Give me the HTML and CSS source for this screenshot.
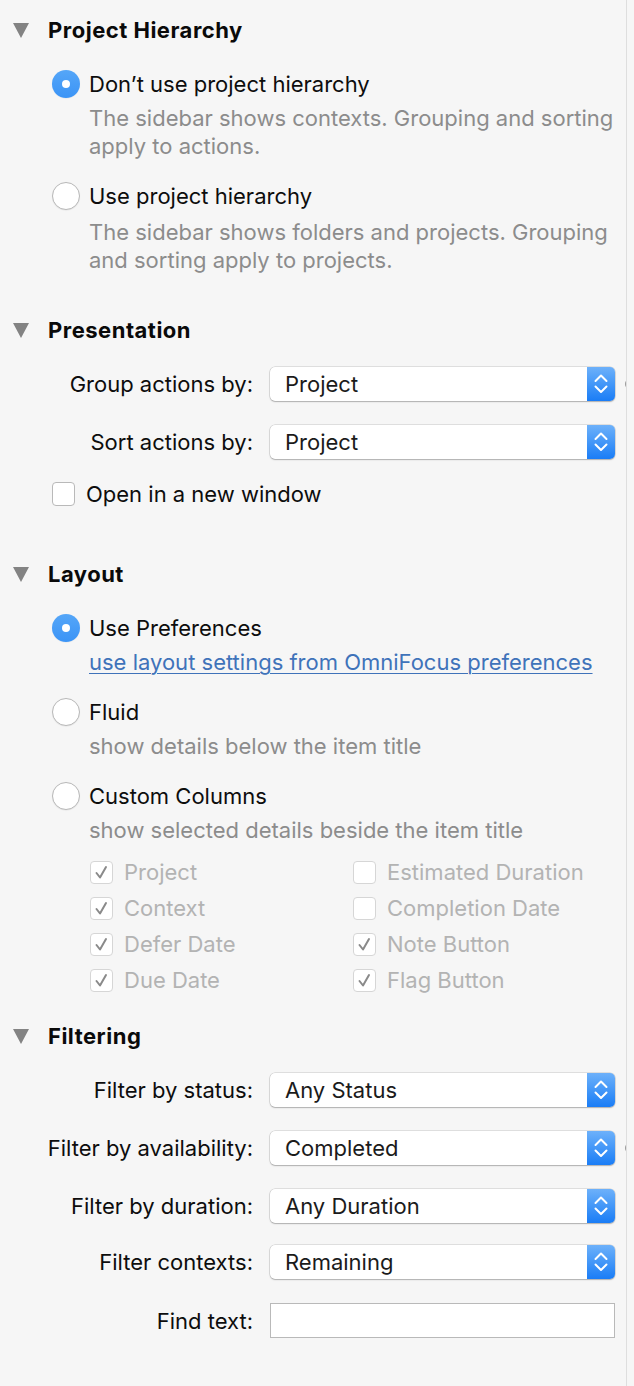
FILE: index.html
```html
<!DOCTYPE html>
<html>
<head>
<meta charset="utf-8">
<link rel="stylesheet" href="styles.css">
</head>
<body>
<div class="panel">

  <section class="sec sec-first">
    <h2 class="sec-head"><span class="tri"></span>Project Hierarchy</h2>
    <div class="opt"><span class="radio on"></span><span>Don’t use project hierarchy</span></div>
    <p class="desc">The sidebar shows contexts. Grouping and sorting apply to actions.</p>
    <div class="opt"><span class="radio"></span><span>Use project hierarchy</span></div>
    <p class="desc desc-b">The sidebar shows folders and projects. Grouping and sorting apply to projects.</p>
  </section>

  <section class="sec sec-pres">
    <h2 class="sec-head"><span class="tri"></span>Presentation</h2>
    <div class="form">
      <label class="flabel">Group actions by:</label>
      <div class="select"><span class="sel-text">Project</span><span class="sel-btn"><svg viewBox="0 0 28 34" width="28" height="34"><polyline points="8.5,14 14,8.5 19.5,14" /><polyline points="8.5,19.5 14,25 19.5,19.5" /></svg></span></div>
      <span class="peek"></span>
      <label class="flabel">Sort actions by:</label>
      <div class="select"><span class="sel-text">Project</span><span class="sel-btn"><svg viewBox="0 0 28 34" width="28" height="34"><polyline points="8.5,14 14,8.5 19.5,14" /><polyline points="8.5,19.5 14,25 19.5,19.5" /></svg></span></div>
      <span></span>
    </div>
    <div class="check-row"><span class="box"></span><span>Open in a new window</span></div>
  </section>

  <section class="sec sec-layout">
    <h2 class="sec-head"><span class="tri"></span>Layout</h2>
    <div class="opt"><span class="radio on"></span><span>Use Preferences</span></div>
    <a class="link" href="#">use layout settings from OmniFocus preferences</a>
    <div class="opt"><span class="radio"></span><span>Fluid</span></div>
    <p class="desc">show details below the item title</p>
    <div class="opt"><span class="radio"></span><span>Custom Columns</span></div>
    <p class="desc">show selected details beside the item title</p>
    <div class="cols">
      <div class="col-item"><span class="box dis"><svg viewBox="0 0 23 23" width="23" height="23"><polyline points="6.5,12 10,16.5 16,6" /></svg></span>Project</div>
      <div class="col-item"><span class="box dis"></span>Estimated Duration</div>
      <div class="col-item"><span class="box dis"><svg viewBox="0 0 23 23" width="23" height="23"><polyline points="6.5,12 10,16.5 16,6" /></svg></span>Context</div>
      <div class="col-item"><span class="box dis"></span>Completion Date</div>
      <div class="col-item"><span class="box dis"><svg viewBox="0 0 23 23" width="23" height="23"><polyline points="6.5,12 10,16.5 16,6" /></svg></span>Defer Date</div>
      <div class="col-item"><span class="box dis"><svg viewBox="0 0 23 23" width="23" height="23"><polyline points="6.5,12 10,16.5 16,6" /></svg></span>Note Button</div>
      <div class="col-item"><span class="box dis"><svg viewBox="0 0 23 23" width="23" height="23"><polyline points="6.5,12 10,16.5 16,6" /></svg></span>Due Date</div>
      <div class="col-item"><span class="box dis"><svg viewBox="0 0 23 23" width="23" height="23"><polyline points="6.5,12 10,16.5 16,6" /></svg></span>Flag Button</div>
    </div>
  </section>

  <section class="sec sec-filter">
    <h2 class="sec-head"><span class="tri"></span>Filtering</h2>
    <div class="form">
      <label class="flabel">Filter by status:</label>
      <div class="select"><span class="sel-text">Any Status</span><span class="sel-btn"><svg viewBox="0 0 28 34" width="28" height="34"><polyline points="8.5,14 14,8.5 19.5,14" /><polyline points="8.5,19.5 14,25 19.5,19.5" /></svg></span></div>
      <span></span>
      <label class="flabel">Filter by availability:</label>
      <div class="select"><span class="sel-text">Completed</span><span class="sel-btn"><svg viewBox="0 0 28 34" width="28" height="34"><polyline points="8.5,14 14,8.5 19.5,14" /><polyline points="8.5,19.5 14,25 19.5,19.5" /></svg></span></div>
      <span class="peek"></span>
      <label class="flabel">Filter by duration:</label>
      <div class="select"><span class="sel-text">Any Duration</span><span class="sel-btn"><svg viewBox="0 0 28 34" width="28" height="34"><polyline points="8.5,14 14,8.5 19.5,14" /><polyline points="8.5,19.5 14,25 19.5,19.5" /></svg></span></div>
      <span></span>
      <label class="flabel tight">Filter contexts:</label>
      <div class="select tight"><span class="sel-text">Remaining</span><span class="sel-btn"><svg viewBox="0 0 28 34" width="28" height="34"><polyline points="8.5,14 14,8.5 19.5,14" /><polyline points="8.5,19.5 14,25 19.5,19.5" /></svg></span></div>
      <span class="tight"></span>
      <label class="flabel">Find text:</label>
      <div class="textfield"></div>
      <span></span>
    </div>
  </section>

</div>
</body>
</html>
```

FILE: styles.css
```css
* { box-sizing: border-box; }

body {
  margin: 0;
  background: #f6f6f6;
  font-family: "Inter", "Liberation Sans", Arial, sans-serif;
  font-size: 22px;
  color: #0d0d0d;
}

.panel {
  width: 627px;
  min-height: 1386px;
  border-right: 1px solid #dedede;
  overflow: hidden;
}

.sec { margin: 0; }
.sec-first { padding-top: 16px; }
.sec-pres { padding-top: 42px; }
.sec-layout { padding-top: 52px; }
.sec-filter { padding-top: 24px; }

.sec-head {
  display: flex;
  align-items: center;
  gap: 19px;
  margin: 0;
  padding-left: 13px;
  height: 28px;
  font-size: 22px;
  font-weight: 700;
  letter-spacing: 0.5px;
  color: #0a0a0a;
}

.tri {
  width: 0;
  height: 0;
  border-left: 8.5px solid transparent;
  border-right: 8.5px solid transparent;
  border-top: 15px solid #838383;
}

.opt {
  display: flex;
  align-items: center;
  gap: 9px;
  height: 28px;
  padding-left: 52px;
  margin-top: 22px;
}
.sec-head + .opt { margin-top: 26px; }

.radio {
  width: 28px;
  height: 28px;
  border-radius: 50%;
  background: #fff;
  border: 1px solid #b8b8b8;
  box-shadow: 0 0.5px 1px rgba(0,0,0,0.08);
  display: flex;
  align-items: center;
  justify-content: center;
  flex: none;
}
.radio.on {
  border: none;
  background: linear-gradient(#55a6f8, #3b94f6);
}
.radio.on::after {
  content: "";
  width: 8px;
  height: 8px;
  border-radius: 50%;
  background: #fff;
}

.desc {
  margin: 6px 0 0;
  padding-left: 89px;
  line-height: 28px;
  color: #8c8c8c;
}
.desc-b { margin-top: 8px; }

.link {
  display: block;
  margin-top: 6px;
  margin-left: 89px;
  line-height: 28px;
  color: #3f73ba;
  text-decoration: underline;
  text-underline-offset: 3px;
  text-decoration-thickness: 1px;
}

.form {
  display: grid;
  grid-template-columns: 253px 345px 12px;
  column-gap: 17px;
  row-gap: 24px;
  align-items: center;
  margin-top: 23px;
}
.form .tight { margin-top: -2px; }

.flabel {
  text-align: right;
  white-space: nowrap;
}

.select {
  display: flex;
  height: 34px;
  background: #fff;
  border-radius: 5px;
  box-shadow: 0 0 0 0.5px rgba(0,0,0,0.18), 0 1px 1.5px rgba(0,0,0,0.22);
}
.sel-text {
  flex: 1;
  padding-left: 15px;
  line-height: 34px;
  color: #1b1b1b;
}
.sel-btn {
  width: 28px;
  height: 34px;
  border-radius: 0 5px 5px 0;
  background: linear-gradient(#6db1fa, #1a7df6);
}
.sel-btn svg { display: block; }
.sel-btn polyline {
  fill: none;
  stroke: #fff;
  stroke-width: 2;
  stroke-linecap: round;
  stroke-linejoin: round;
}

.peek {
  width: 12px;
  height: 12px;
  margin-left: -7px;
  border-radius: 50%;
  background: #9c9c9c;
}

.textfield {
  height: 35px;
  background: #fff;
  border: 1px solid #b9b9b9;
}

.check-row {
  display: flex;
  align-items: center;
  gap: 11px;
  height: 28px;
  padding-left: 52px;
  margin-top: 21px;
}

.box {
  width: 23px;
  height: 24px;
  border-radius: 4px;
  background: #fff;
  border: 1px solid #b9b9b9;
  flex: none;
}
.box.dis {
  height: 23px;
  border-color: #d6d6d6;
}
.box svg { display: block; margin: -1px; }
.box polyline {
  fill: none;
  stroke: #8a8a8a;
  stroke-width: 2;
  stroke-linecap: round;
  stroke-linejoin: round;
}

.cols {
  display: grid;
  grid-template-columns: 263px 1fr;
  grid-auto-rows: 36px;
  padding-left: 90px;
  margin-top: 10px;
}

.col-item {
  display: flex;
  align-items: center;
  gap: 11px;
  color: #b3b3b3;
  white-space: nowrap;
}
```
